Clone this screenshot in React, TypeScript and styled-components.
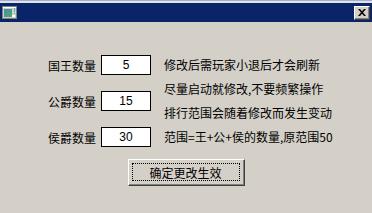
import React from 'react';
import styled, { createGlobalStyle } from 'styled-components';

const GlobalStyle = createGlobalStyle`
    html, body {
        margin: 0;
        padding: 0;
        background: #d4d0c8;
    }
    body {
        font-family: "Noto Sans CJK SC", "Liberation Sans", sans-serif;
        font-size: 12px;
        color: #000;
    }
`;

const rows = [
    { label: '国王数量', value: '5' },
    { label: '公爵数量', value: '15' },
    { label: '侯爵数量', value: '30' },
];

const notes = [
    '修改后需玩家小退后才会刷新',
    '尽量启动就修改,不要频繁操作',
    '排行范围会随着修改而发生变动',
    '范围=王+公+侯的数量,原范围50',
];

const App = () => {
    return (
        <Window>
            <GlobalStyle />
            <TopEdge />
            <TitleBar>
                <svg width="15" height="13" viewBox="0 0 15 13">
                    <rect x="0.5" y="0.5" width="14" height="12" fill="#d4d0c8" stroke="#808080" />
                    <rect x="1" y="1" width="13" height="1" fill="#ffffff" />
                    <defs>
                        <linearGradient id="g" x1="0" y1="0" x2="1" y2="1">
                            <stop offset="0" stopColor="#3d8fb0" />
                            <stop offset="1" stopColor="#57a86a" />
                        </linearGradient>
                    </defs>
                    <rect x="2" y="3" width="8" height="8" fill="url(#g)" />
                    <rect x="10" y="9" width="3" height="2" fill="#ffffff" />
                    <rect x="12" y="2" width="1" height="4" fill="#2fc4c4" />
                    <rect x="12" y="7" width="1" height="1" fill="#2fc4c4" />
                </svg>
                <CloseButton>
                    <svg width="8" height="7" viewBox="0 0 8 7">
                        <path d="M0 0h2l2 2.3L6 0h2L5 3.5 8 7H6L4 4.7 2 7H0l3-3.5z" fill="#000" />
                    </svg>
                </CloseButton>
            </TitleBar>
            <Body>
                <Columns>
                    <Fields>
                        {rows.map(r => (
                            <FieldRow key={r.label}>
                                <Label>{r.label}</Label>
                                <NumberBox defaultValue={r.value} />
                            </FieldRow>
                        ))}
                    </Fields>
                    <Notes>
                        {notes.map(n => <Note key={n}>{n}</Note>)}
                    </Notes>
                </Columns>
                <ApplyButton>
                    <FocusRect>确定更改生效</FocusRect>
                </ApplyButton>
            </Body>
        </Window>
    );
};

export default App;

const Window = styled.div`
    width: 372px;
    height: 213px;
    background: #d4d0c8;
    overflow: hidden;
`;

const TopEdge = styled.div`
    height: 2px;
    border-top: 1px solid #9bb0d8;
    background: #e4e2de;
`;

const TitleBar = styled.div`
    height: 19px;
    background: #0a246a;
    display: flex;
    align-items: center;
    justify-content: space-between;
    padding: 0 2px 0 2px;
`;

const CloseButton = styled.div`
    width: 16px;
    height: 14px;
    box-sizing: border-box;
    background: #d4d0c8;
    border: 1px solid;
    border-color: #ffffff #404040 #404040 #ffffff;
    box-shadow: inset -1px -1px #808080;
    display: flex;
    align-items: center;
    justify-content: center;
    padding-right: 1px;
`;

const Body = styled.div`
    display: flex;
    flex-direction: column;
    align-items: center;
    padding-top: 31px;
`;

const Columns = styled.div`
    align-self: stretch;
    display: flex;
    align-items: flex-start;
    padding-left: 48px;
    gap: 13px;
`;

const Fields = styled.div`
    display: flex;
    flex-direction: column;
    gap: 16px;
    padding-top: 2px;
`;

const FieldRow = styled.div`
    display: flex;
    align-items: center;
    gap: 5px;
`;

const Label = styled.span`
    width: 48px;
    line-height: 19px;
    white-space: nowrap;
`;

const NumberBox = styled.input`
    width: 50px;
    height: 20px;
    box-sizing: border-box;
    border: 1px solid #000;
    background: #fff;
    padding: 0;
    margin: 0;
    text-align: center;
    font-family: "Liberation Sans", sans-serif;
    font-size: 12px;
    color: #000;
    outline: none;
`;

const Notes = styled.div`
    display: flex;
    flex-direction: column;
`;

const Note = styled.div`
    line-height: 24px;
    white-space: nowrap;
`;

const ApplyButton = styled.div`
    margin-top: 10px;
    width: 117px;
    height: 27px;
    box-sizing: border-box;
    border: 1px solid;
    border-color: #ffffff #404040 #404040 #ffffff;
    box-shadow: inset -1px -1px #808080;
    padding: 3px 4px 4px 3px;
    display: flex;
`;

const FocusRect = styled.div`
    flex: 1;
    border: 1px dotted #000;
    display: flex;
    align-items: center;
    justify-content: center;
    font-size: 12px;
`;
